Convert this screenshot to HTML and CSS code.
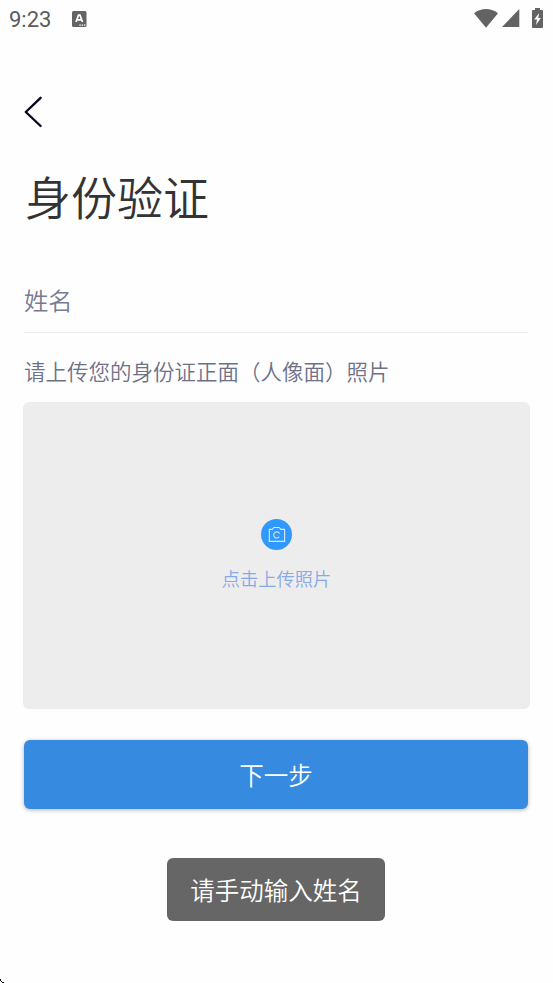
FILE: index.html
```html
<!DOCTYPE html>
<html lang="zh-CN">
<head>
    <meta charset="UTF-8">
    <title>身份验证</title>
    <link rel="stylesheet" href="styles.css">
</head>
<body>
    <div class="status">
        <span class="time">9:23</span>
        <svg class="app-icon" width="15" height="16" viewBox="0 0 15 16">
            <rect width="14.5" height="16" rx="1.5" fill="#636363"/>
            <path d="M4 11L6.5 4.2H8L10.5 11M5.2 8.8H9.2" fill="none" stroke="#fff" stroke-width="1.7"/>
            <path d="M7.3 14.2h1.5M9.6 14.2h1.5M11.9 14.2h1.5" stroke="#fff" stroke-width="1.2"/>
        </svg>
        <div class="signals">
            <svg width="24" height="19" viewBox="0 0 24 19">
                <path d="M0 4.2Q12 -4.2 24 4.2L12 18.8Z" fill="#636363"/>
            </svg>
            <svg width="18" height="18" viewBox="0 0 18 18">
                <path d="M17.3 0V18H0Z" fill="#636363"/>
            </svg>
            <svg class="battery" width="11" height="20" viewBox="0 0 11 20">
                <path d="M3 0h5v2h2a1 1 0 0 1 1 1v16a1 1 0 0 1-1 1H1a1 1 0 0 1-1-1V3a1 1 0 0 1 1-1h2z" fill="#636363"/>
                <path d="M7.2 5L2.2 11.5H5L4 17L8.9 10H6.2Z" fill="#fff"/>
            </svg>
        </div>
    </div>

    <div class="content">
        <svg class="back" width="20" height="32" viewBox="0 0 20 32">
            <path d="M16.6 1.8L1.8 16L16.6 30" fill="none" stroke="#0c0820" stroke-width="2.4" stroke-linecap="round" stroke-linejoin="round"/>
        </svg>
        <h1 class="title">身份验证</h1>
        <div class="field">姓名</div>
        <p class="hint">请上传您的身份证正面（人像面）照片</p>
        <div class="upload">
            <svg width="31" height="31" viewBox="0 0 31 31">
                <circle cx="15.5" cy="15.5" r="15.5" fill="#2f99ff"/>
                <path d="M8.3 10.4H11.2L12.8 8.5H18.2L19.8 10.4H23.6V22.4H8.3Z" fill="none" stroke="#d6ebff" stroke-width="1.1" stroke-linejoin="round"/>
                <path d="M18.6 14.6A3.1 3.1 0 1 0 18.2 17.9" fill="none" stroke="#d6ebff" stroke-width="1.1"/>
            </svg>
            <span class="upload-text">点击上传照片</span>
        </div>
        <button class="next">下一步</button>
    </div>

    <div class="toast">请手动输入姓名</div>
    <svg class="corner" width="4" height="4" viewBox="0 0 4 4">
        <path d="M0 0h1v2H0zM1 2h1v1H1zM2 3h2v1H2z" fill="#111"/>
    </svg>
</body>
</html>
```

FILE: styles.css
```css
*{
    margin:0;
    padding:0;
    box-sizing: border-box;
}
body{
    position: relative;
    height: 983px;
    overflow: hidden;
    background: #fefefe;
    font-family: "Noto Sans CJK SC DemiLight", "Noto Sans CJK SC", sans-serif;
    font-weight: 350;
}
svg{
    display: block;
}
.status{
    display: flex;
    align-items: center;
    height: 38px;
    padding: 0 10px 0 9px;
}
.time{
    width: 63px;
    padding-top: 2px;
    font: 400 22px/38px Roboto, sans-serif;
    color: #5c5c5c;
}
.signals{
    display: flex;
    align-items: center;
    gap: 4px;
    margin-left: auto;
}
.signals svg{
    position: relative;
    top: -1px;
}
.battery{
    margin-left: 8px;
}
.content{
    padding: 58px 25px 0 24px;
}
.title{
    margin-top: 33px;
    padding-left: 1px;
    font-size: 46px;
    font-weight: 350;
    line-height: 68px;
    color: #333;
}
.field{
    height: 66px;
    margin-top: 38px;
    border-bottom: 1px solid #ededed;
    font-size: 24.3px;
    line-height: 65px;
    color: #777b90;
}
.hint{
    margin-top: 22px;
    font-size: 21.5px;
    line-height: 32px;
    color: #6d7188;
}
.upload{
    display: flex;
    flex-direction: column;
    align-items: center;
    height: 307px;
    margin: 15px -2px 0 -1px;
    padding-top: 117px;
    border-radius: 6px;
    background: #ededed;
}
.upload-text{
    margin-top: 15px;
    font-size: 18.3px;
    line-height: 27px;
    color: #86aae6;
}
.next{
    display: block;
    width: 100%;
    height: 69px;
    margin-top: 31px;
    padding-bottom: 1px;
    border: 0;
    border-radius: 6px;
    background: #368ae0;
    box-shadow: 0 1px 4px rgba(0,0,0,.3);
    font: inherit;
    font-size: 24.5px;
    color: #fff;
}
.toast{
    position: absolute;
    left: 167px;
    top: 858px;
    width: 218px;
    height: 63px;
    border-radius: 6px;
    background: #666;
    font-size: 24.5px;
    line-height: 63px;
    text-align: center;
    color: #fff;
}
.corner{
    position: absolute;
    left: 0;
    bottom: 0;
}
```
